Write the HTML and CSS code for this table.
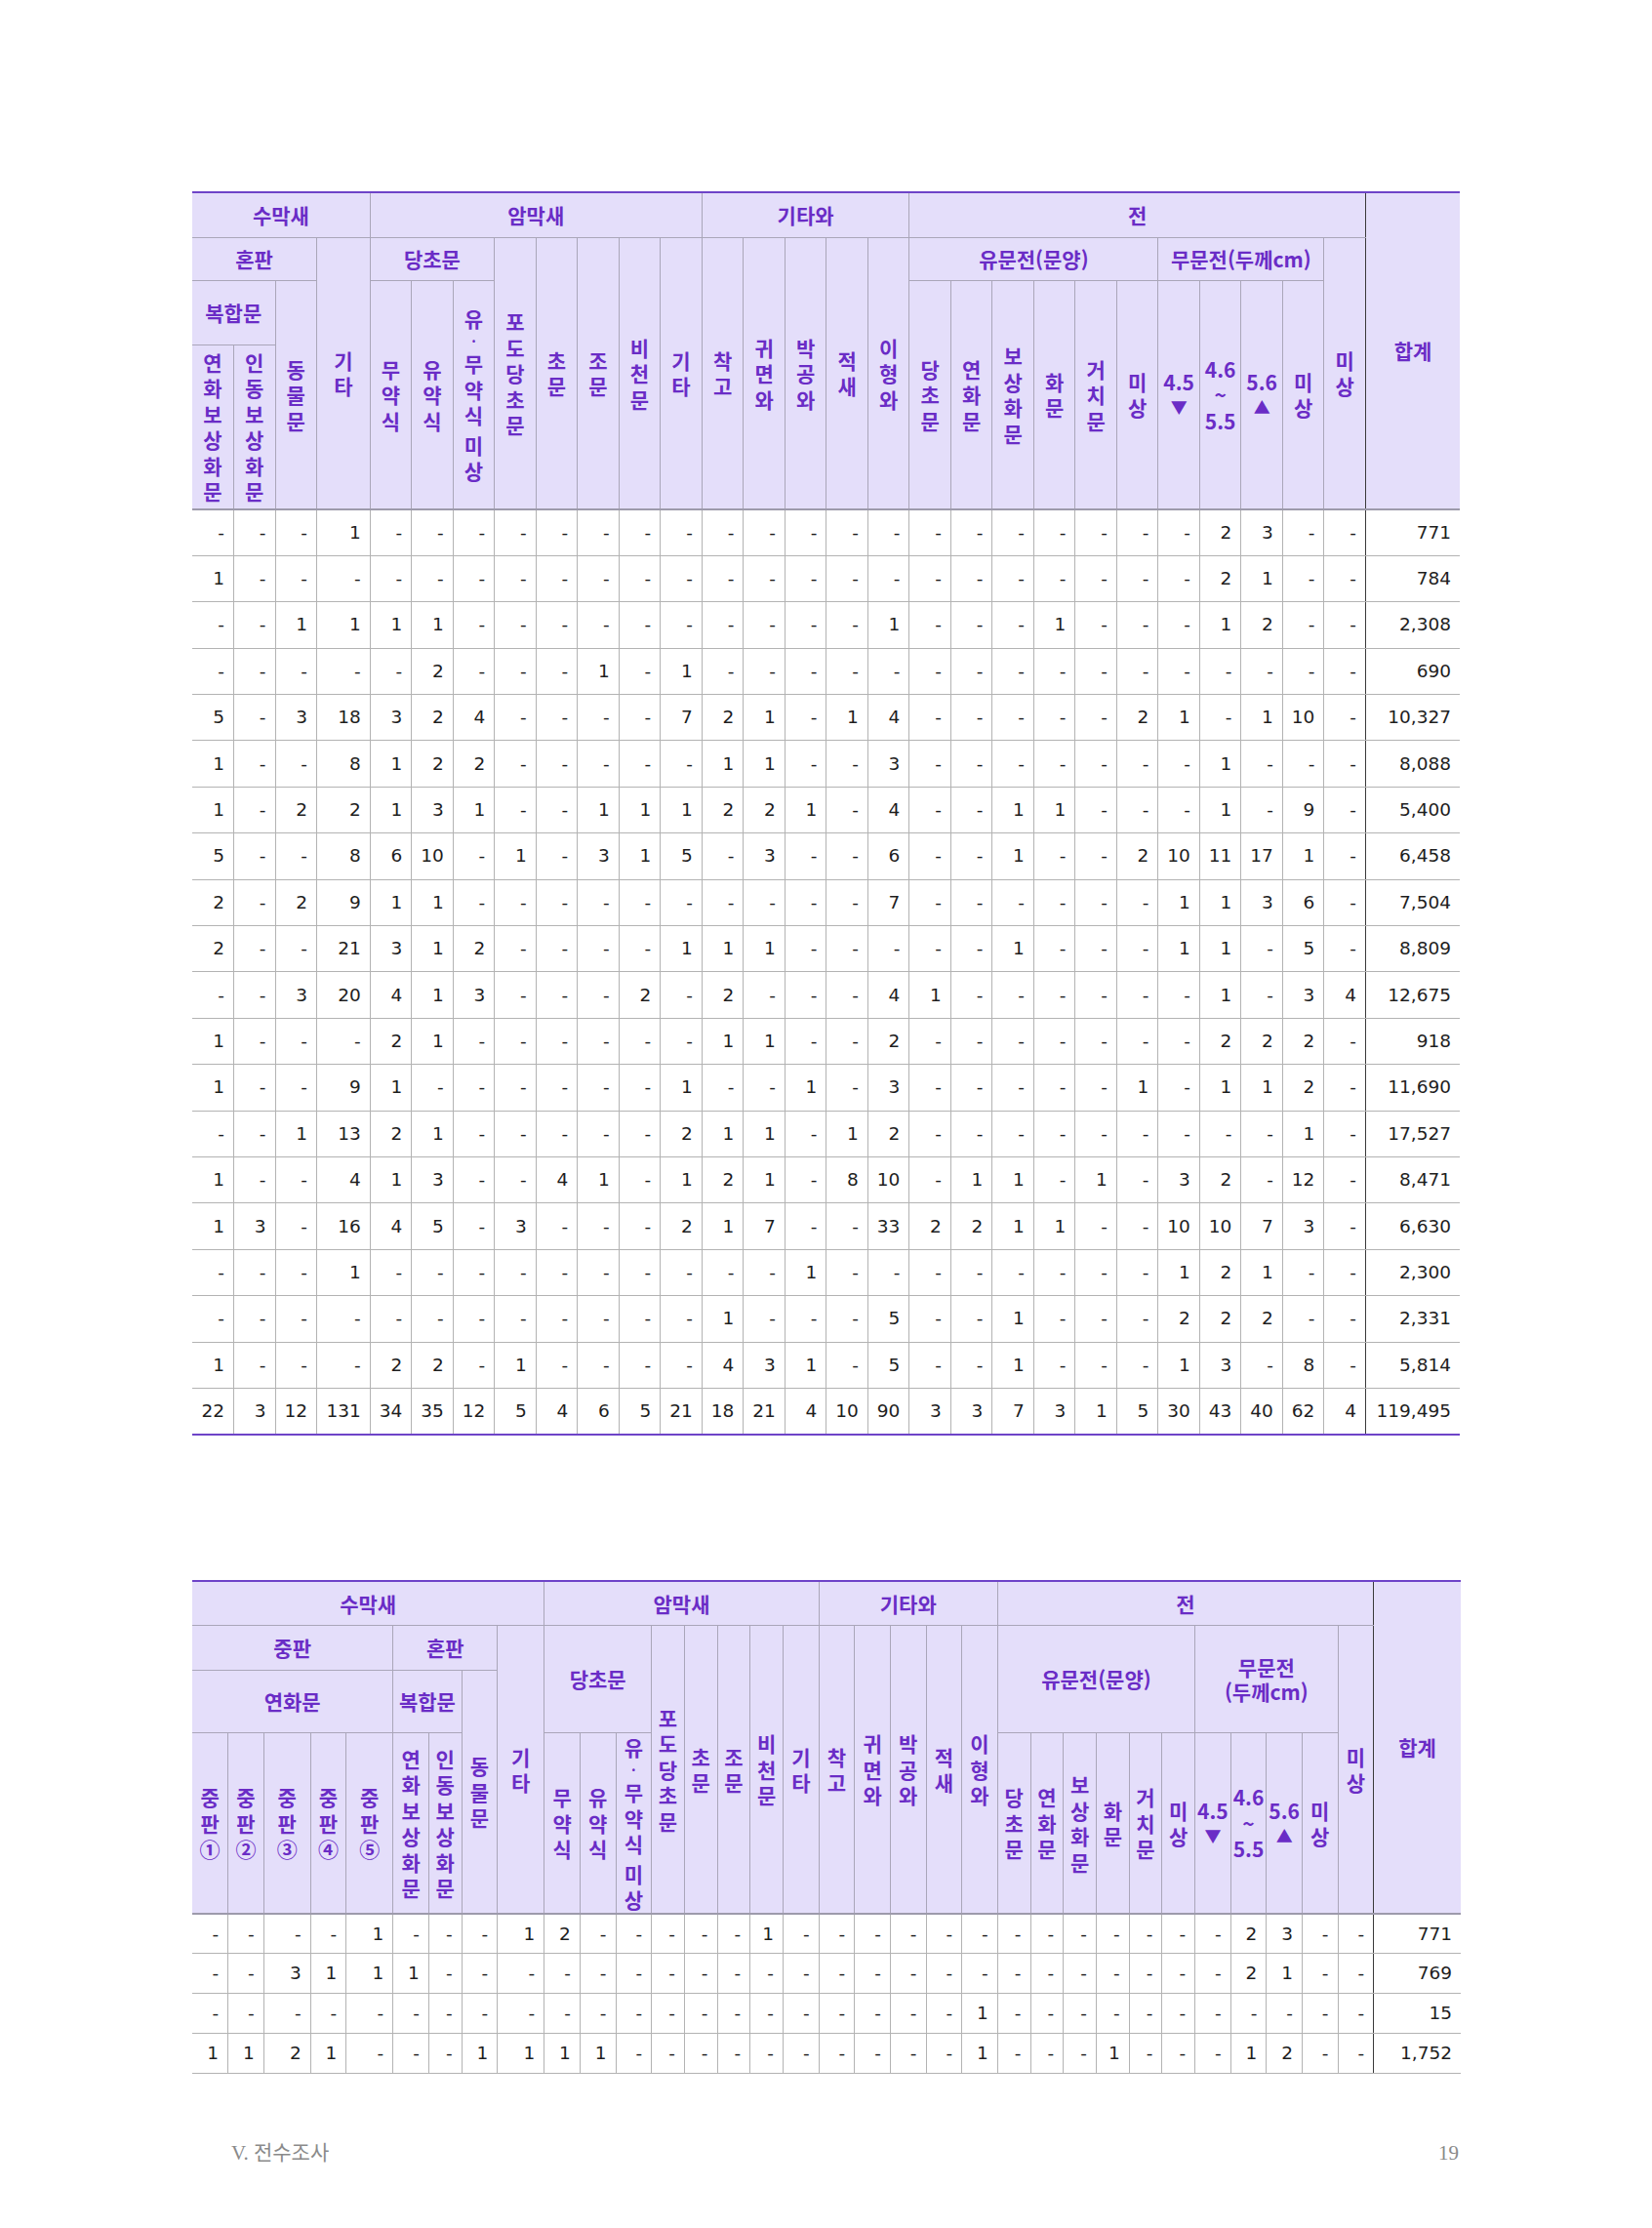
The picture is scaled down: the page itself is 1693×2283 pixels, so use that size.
FILE: index.html
```html
<!DOCTYPE html>
<html lang="ko">
<head>
<meta charset="utf-8">
<title>전수조사</title>
<link rel="stylesheet" href="styles.css">
</head>
<body>
<div class="page">

<table class="grid t1">
<colgroup>
<col class="n"><col class="n"><col class="n"><col class="w">
<col class="n"><col class="n"><col class="n"><col class="n"><col class="n"><col class="n"><col class="n"><col class="n">
<col class="n"><col class="n"><col class="n"><col class="n"><col class="n">
<col class="n"><col class="n"><col class="n"><col class="n"><col class="n"><col class="n"><col class="n"><col class="n"><col class="n"><col class="n"><col class="n">
<col class="s">
</colgroup>
<thead>
<tr class="h1">
<th colspan="4">수막새</th>
<th colspan="8">암막새</th>
<th colspan="5">기타와</th>
<th colspan="11" class="pre">전</th>
<th rowspan="4" class="sum">합계</th>
</tr>
<tr class="h2">
<th colspan="3">혼판</th>
<th rowspan="3" class="v"><span>기</span><span>타</span></th>
<th colspan="3">당초문</th>
<th rowspan="3" class="v"><span>포</span><span>도</span><span>당</span><span>초</span><span>문</span></th>
<th rowspan="3" class="v"><span>초</span><span>문</span></th>
<th rowspan="3" class="v"><span>조</span><span>문</span></th>
<th rowspan="3" class="v"><span>비</span><span>천</span><span>문</span></th>
<th rowspan="3" class="v"><span>기</span><span>타</span></th>
<th rowspan="3" class="v"><span>착</span><span>고</span></th>
<th rowspan="3" class="v"><span>귀</span><span>면</span><span>와</span></th>
<th rowspan="3" class="v"><span>박</span><span>공</span><span>와</span></th>
<th rowspan="3" class="v"><span>적</span><span>새</span></th>
<th rowspan="3" class="v"><span>이</span><span>형</span><span>와</span></th>
<th colspan="6">유문전(문양)</th>
<th colspan="4">무문전(두께cm)</th>
<th rowspan="3" class="v pre"><span>미</span><span>상</span></th>
</tr>
<tr class="h3">
<th colspan="2">복합문</th>
<th rowspan="2" class="v"><span>동</span><span>물</span><span>문</span></th>
<th rowspan="2" class="v"><span>무</span><span>약</span><span>식</span></th>
<th rowspan="2" class="v"><span>유</span><span>약</span><span>식</span></th>
<th rowspan="2" class="v"><span>유</span><span class="dot">·</span><span>무</span><span>약</span><span>식</span><span class="gap">미</span><span>상</span></th>
<th rowspan="2" class="v"><span>당</span><span>초</span><span>문</span></th>
<th rowspan="2" class="v"><span>연</span><span>화</span><span>문</span></th>
<th rowspan="2" class="v"><span>보</span><span>상</span><span>화</span><span>문</span></th>
<th rowspan="2" class="v"><span>화</span><span>문</span></th>
<th rowspan="2" class="v"><span>거</span><span>치</span><span>문</span></th>
<th rowspan="2" class="v"><span>미</span><span>상</span></th>
<th rowspan="2" class="v"><span>4.5</span><span class="tri">▼</span></th>
<th rowspan="2" class="v"><span>4.6</span><span>~</span><span>5.5</span></th>
<th rowspan="2" class="v"><span>5.6</span><span class="tri">▲</span></th>
<th rowspan="2" class="v"><span>미</span><span>상</span></th>
</tr>
<tr class="h4">
<th class="v"><span>연</span><span>화</span><span>보</span><span>상</span><span>화</span><span>문</span></th>
<th class="v"><span>인</span><span>동</span><span>보</span><span>상</span><span>화</span><span>문</span></th>
</tr>
</thead>
<tbody>
<tr><td>-</td><td>-</td><td>-</td><td>1</td><td>-</td><td>-</td><td>-</td><td>-</td><td>-</td><td>-</td><td>-</td><td>-</td><td>-</td><td>-</td><td>-</td><td>-</td><td>-</td><td>-</td><td>-</td><td>-</td><td>-</td><td>-</td><td>-</td><td>-</td><td>2</td><td>3</td><td>-</td><td>-</td><td>771</td></tr>
<tr><td>1</td><td>-</td><td>-</td><td>-</td><td>-</td><td>-</td><td>-</td><td>-</td><td>-</td><td>-</td><td>-</td><td>-</td><td>-</td><td>-</td><td>-</td><td>-</td><td>-</td><td>-</td><td>-</td><td>-</td><td>-</td><td>-</td><td>-</td><td>-</td><td>2</td><td>1</td><td>-</td><td>-</td><td>784</td></tr>
<tr><td>-</td><td>-</td><td>1</td><td>1</td><td>1</td><td>1</td><td>-</td><td>-</td><td>-</td><td>-</td><td>-</td><td>-</td><td>-</td><td>-</td><td>-</td><td>-</td><td>1</td><td>-</td><td>-</td><td>-</td><td>1</td><td>-</td><td>-</td><td>-</td><td>1</td><td>2</td><td>-</td><td>-</td><td>2,308</td></tr>
<tr><td>-</td><td>-</td><td>-</td><td>-</td><td>-</td><td>2</td><td>-</td><td>-</td><td>-</td><td>1</td><td>-</td><td>1</td><td>-</td><td>-</td><td>-</td><td>-</td><td>-</td><td>-</td><td>-</td><td>-</td><td>-</td><td>-</td><td>-</td><td>-</td><td>-</td><td>-</td><td>-</td><td>-</td><td>690</td></tr>
<tr><td>5</td><td>-</td><td>3</td><td>18</td><td>3</td><td>2</td><td>4</td><td>-</td><td>-</td><td>-</td><td>-</td><td>7</td><td>2</td><td>1</td><td>-</td><td>1</td><td>4</td><td>-</td><td>-</td><td>-</td><td>-</td><td>-</td><td>2</td><td>1</td><td>-</td><td>1</td><td>10</td><td>-</td><td>10,327</td></tr>
<tr><td>1</td><td>-</td><td>-</td><td>8</td><td>1</td><td>2</td><td>2</td><td>-</td><td>-</td><td>-</td><td>-</td><td>-</td><td>1</td><td>1</td><td>-</td><td>-</td><td>3</td><td>-</td><td>-</td><td>-</td><td>-</td><td>-</td><td>-</td><td>-</td><td>1</td><td>-</td><td>-</td><td>-</td><td>8,088</td></tr>
<tr><td>1</td><td>-</td><td>2</td><td>2</td><td>1</td><td>3</td><td>1</td><td>-</td><td>-</td><td>1</td><td>1</td><td>1</td><td>2</td><td>2</td><td>1</td><td>-</td><td>4</td><td>-</td><td>-</td><td>1</td><td>1</td><td>-</td><td>-</td><td>-</td><td>1</td><td>-</td><td>9</td><td>-</td><td>5,400</td></tr>
<tr><td>5</td><td>-</td><td>-</td><td>8</td><td>6</td><td>10</td><td>-</td><td>1</td><td>-</td><td>3</td><td>1</td><td>5</td><td>-</td><td>3</td><td>-</td><td>-</td><td>6</td><td>-</td><td>-</td><td>1</td><td>-</td><td>-</td><td>2</td><td>10</td><td>11</td><td>17</td><td>1</td><td>-</td><td>6,458</td></tr>
<tr><td>2</td><td>-</td><td>2</td><td>9</td><td>1</td><td>1</td><td>-</td><td>-</td><td>-</td><td>-</td><td>-</td><td>-</td><td>-</td><td>-</td><td>-</td><td>-</td><td>7</td><td>-</td><td>-</td><td>-</td><td>-</td><td>-</td><td>-</td><td>1</td><td>1</td><td>3</td><td>6</td><td>-</td><td>7,504</td></tr>
<tr><td>2</td><td>-</td><td>-</td><td>21</td><td>3</td><td>1</td><td>2</td><td>-</td><td>-</td><td>-</td><td>-</td><td>1</td><td>1</td><td>1</td><td>-</td><td>-</td><td>-</td><td>-</td><td>-</td><td>1</td><td>-</td><td>-</td><td>-</td><td>1</td><td>1</td><td>-</td><td>5</td><td>-</td><td>8,809</td></tr>
<tr><td>-</td><td>-</td><td>3</td><td>20</td><td>4</td><td>1</td><td>3</td><td>-</td><td>-</td><td>-</td><td>2</td><td>-</td><td>2</td><td>-</td><td>-</td><td>-</td><td>4</td><td>1</td><td>-</td><td>-</td><td>-</td><td>-</td><td>-</td><td>-</td><td>1</td><td>-</td><td>3</td><td>4</td><td>12,675</td></tr>
<tr><td>1</td><td>-</td><td>-</td><td>-</td><td>2</td><td>1</td><td>-</td><td>-</td><td>-</td><td>-</td><td>-</td><td>-</td><td>1</td><td>1</td><td>-</td><td>-</td><td>2</td><td>-</td><td>-</td><td>-</td><td>-</td><td>-</td><td>-</td><td>-</td><td>2</td><td>2</td><td>2</td><td>-</td><td>918</td></tr>
<tr><td>1</td><td>-</td><td>-</td><td>9</td><td>1</td><td>-</td><td>-</td><td>-</td><td>-</td><td>-</td><td>-</td><td>1</td><td>-</td><td>-</td><td>1</td><td>-</td><td>3</td><td>-</td><td>-</td><td>-</td><td>-</td><td>-</td><td>1</td><td>-</td><td>1</td><td>1</td><td>2</td><td>-</td><td>11,690</td></tr>
<tr><td>-</td><td>-</td><td>1</td><td>13</td><td>2</td><td>1</td><td>-</td><td>-</td><td>-</td><td>-</td><td>-</td><td>2</td><td>1</td><td>1</td><td>-</td><td>1</td><td>2</td><td>-</td><td>-</td><td>-</td><td>-</td><td>-</td><td>-</td><td>-</td><td>-</td><td>-</td><td>1</td><td>-</td><td>17,527</td></tr>
<tr><td>1</td><td>-</td><td>-</td><td>4</td><td>1</td><td>3</td><td>-</td><td>-</td><td>4</td><td>1</td><td>-</td><td>1</td><td>2</td><td>1</td><td>-</td><td>8</td><td>10</td><td>-</td><td>1</td><td>1</td><td>-</td><td>1</td><td>-</td><td>3</td><td>2</td><td>-</td><td>12</td><td>-</td><td>8,471</td></tr>
<tr><td>1</td><td>3</td><td>-</td><td>16</td><td>4</td><td>5</td><td>-</td><td>3</td><td>-</td><td>-</td><td>-</td><td>2</td><td>1</td><td>7</td><td>-</td><td>-</td><td>33</td><td>2</td><td>2</td><td>1</td><td>1</td><td>-</td><td>-</td><td>10</td><td>10</td><td>7</td><td>3</td><td>-</td><td>6,630</td></tr>
<tr><td>-</td><td>-</td><td>-</td><td>1</td><td>-</td><td>-</td><td>-</td><td>-</td><td>-</td><td>-</td><td>-</td><td>-</td><td>-</td><td>-</td><td>1</td><td>-</td><td>-</td><td>-</td><td>-</td><td>-</td><td>-</td><td>-</td><td>-</td><td>1</td><td>2</td><td>1</td><td>-</td><td>-</td><td>2,300</td></tr>
<tr><td>-</td><td>-</td><td>-</td><td>-</td><td>-</td><td>-</td><td>-</td><td>-</td><td>-</td><td>-</td><td>-</td><td>-</td><td>1</td><td>-</td><td>-</td><td>-</td><td>5</td><td>-</td><td>-</td><td>1</td><td>-</td><td>-</td><td>-</td><td>2</td><td>2</td><td>2</td><td>-</td><td>-</td><td>2,331</td></tr>
<tr><td>1</td><td>-</td><td>-</td><td>-</td><td>2</td><td>2</td><td>-</td><td>1</td><td>-</td><td>-</td><td>-</td><td>-</td><td>4</td><td>3</td><td>1</td><td>-</td><td>5</td><td>-</td><td>-</td><td>1</td><td>-</td><td>-</td><td>-</td><td>1</td><td>3</td><td>-</td><td>8</td><td>-</td><td>5,814</td></tr>
<tr class="total"><td>22</td><td>3</td><td>12</td><td>131</td><td>34</td><td>35</td><td>12</td><td>5</td><td>4</td><td>6</td><td>5</td><td>21</td><td>18</td><td>21</td><td>4</td><td>10</td><td>90</td><td>3</td><td>3</td><td>7</td><td>3</td><td>1</td><td>5</td><td>30</td><td>43</td><td>40</td><td>62</td><td>4</td><td>119,495</td></tr>
</tbody>
</table>

<table class="grid t2">
<colgroup>
<col class="a"><col class="a"><col class="c"><col class="a"><col class="c"><col class="a"><col class="b"><col class="a"><col class="c">
<col class="a"><col class="a"><col class="a"><col class="b"><col class="b"><col class="b"><col class="b"><col class="a">
<col class="a"><col class="a"><col class="a"><col class="a"><col class="a">
<col class="b"><col class="b"><col class="b"><col class="b"><col class="b"><col class="b"><col class="a"><col class="a"><col class="a"><col class="a"><col class="a">
<col class="s">
</colgroup>
<thead>
<tr class="h1">
<th colspan="9">수막새</th>
<th colspan="8">암막새</th>
<th colspan="5">기타와</th>
<th colspan="11" class="pre">전</th>
<th rowspan="4" class="sum">합계</th>
</tr>
<tr class="h2">
<th colspan="5">중판</th>
<th colspan="3">혼판</th>
<th rowspan="3" class="v"><span>기</span><span>타</span></th>
<th colspan="3" rowspan="2">당초문</th>
<th rowspan="3" class="v"><span>포</span><span>도</span><span>당</span><span>초</span><span>문</span></th>
<th rowspan="3" class="v"><span>초</span><span>문</span></th>
<th rowspan="3" class="v"><span>조</span><span>문</span></th>
<th rowspan="3" class="v"><span>비</span><span>천</span><span>문</span></th>
<th rowspan="3" class="v"><span>기</span><span>타</span></th>
<th rowspan="3" class="v"><span>착</span><span>고</span></th>
<th rowspan="3" class="v"><span>귀</span><span>면</span><span>와</span></th>
<th rowspan="3" class="v"><span>박</span><span>공</span><span>와</span></th>
<th rowspan="3" class="v"><span>적</span><span>새</span></th>
<th rowspan="3" class="v"><span>이</span><span>형</span><span>와</span></th>
<th colspan="6" rowspan="2">유문전(문양)</th>
<th colspan="4" rowspan="2">무문전<br>(두께cm)</th>
<th rowspan="3" class="v pre"><span>미</span><span>상</span></th>
</tr>
<tr class="h3">
<th colspan="5">연화문</th>
<th colspan="2">복합문</th>
<th rowspan="2" class="v"><span>동</span><span>물</span><span>문</span></th>
</tr>
<tr class="h4">
<th class="v"><span>중</span><span>판</span><span>①</span></th>
<th class="v"><span>중</span><span>판</span><span>②</span></th>
<th class="v"><span>중</span><span>판</span><span>③</span></th>
<th class="v"><span>중</span><span>판</span><span>④</span></th>
<th class="v"><span>중</span><span>판</span><span>⑤</span></th>
<th class="v"><span>연</span><span>화</span><span>보</span><span>상</span><span>화</span><span>문</span></th>
<th class="v"><span>인</span><span>동</span><span>보</span><span>상</span><span>화</span><span>문</span></th>
<th class="v"><span>무</span><span>약</span><span>식</span></th>
<th class="v"><span>유</span><span>약</span><span>식</span></th>
<th class="v"><span>유</span><span class="dot">·</span><span>무</span><span>약</span><span>식</span><span class="gap">미</span><span>상</span></th>
<th class="v"><span>당</span><span>초</span><span>문</span></th>
<th class="v"><span>연</span><span>화</span><span>문</span></th>
<th class="v"><span>보</span><span>상</span><span>화</span><span>문</span></th>
<th class="v"><span>화</span><span>문</span></th>
<th class="v"><span>거</span><span>치</span><span>문</span></th>
<th class="v"><span>미</span><span>상</span></th>
<th class="v"><span>4.5</span><span class="tri">▼</span></th>
<th class="v"><span>4.6</span><span>~</span><span>5.5</span></th>
<th class="v"><span>5.6</span><span class="tri">▲</span></th>
<th class="v"><span>미</span><span>상</span></th>
</tr>
</thead>
<tbody>
<tr><td>-</td><td>-</td><td>-</td><td>-</td><td>1</td><td>-</td><td>-</td><td>-</td><td>1</td><td>2</td><td>-</td><td>-</td><td>-</td><td>-</td><td>-</td><td>1</td><td>-</td><td>-</td><td>-</td><td>-</td><td>-</td><td>-</td><td>-</td><td>-</td><td>-</td><td>-</td><td>-</td><td>-</td><td>-</td><td>2</td><td>3</td><td>-</td><td>-</td><td>771</td></tr>
<tr><td>-</td><td>-</td><td>3</td><td>1</td><td>1</td><td>1</td><td>-</td><td>-</td><td>-</td><td>-</td><td>-</td><td>-</td><td>-</td><td>-</td><td>-</td><td>-</td><td>-</td><td>-</td><td>-</td><td>-</td><td>-</td><td>-</td><td>-</td><td>-</td><td>-</td><td>-</td><td>-</td><td>-</td><td>-</td><td>2</td><td>1</td><td>-</td><td>-</td><td>769</td></tr>
<tr><td>-</td><td>-</td><td>-</td><td>-</td><td>-</td><td>-</td><td>-</td><td>-</td><td>-</td><td>-</td><td>-</td><td>-</td><td>-</td><td>-</td><td>-</td><td>-</td><td>-</td><td>-</td><td>-</td><td>-</td><td>-</td><td>1</td><td>-</td><td>-</td><td>-</td><td>-</td><td>-</td><td>-</td><td>-</td><td>-</td><td>-</td><td>-</td><td>-</td><td>15</td></tr>
<tr><td>1</td><td>1</td><td>2</td><td>1</td><td>-</td><td>-</td><td>-</td><td>1</td><td>1</td><td>1</td><td>1</td><td>-</td><td>-</td><td>-</td><td>-</td><td>-</td><td>-</td><td>-</td><td>-</td><td>-</td><td>-</td><td>1</td><td>-</td><td>-</td><td>-</td><td>1</td><td>-</td><td>-</td><td>-</td><td>1</td><td>2</td><td>-</td><td>-</td><td>1,752</td></tr>
</tbody>
</table>

<footer class="foot">
<span>V. 전수조사</span>
<span>19</span>
</footer>

</div>
</body>
</html>
```

FILE: styles.css
```css
* {
  box-sizing: border-box;
}

body {
  margin: 0;
  background: #ffffff;
}

.page {
  width: 1693px;
  padding: 196px 0 0 197px;
}

.grid {
  border-collapse: collapse;
  table-layout: fixed;
}

.t1 {
  width: 1298.8px;
}

.t1 .n { width: 42.5px; }
.t1 .w { width: 54.7px; }
.t1 .s { width: 96.6px; }

.t2 {
  width: 1299.7px;
  margin-top: 148px;
}

.t2 .a { width: 36.61px; }
.t2 .b { width: 33.72px; }
.t2 .c { width: 47.97px; }
.t2 .s { width: 89.3px; }

.grid th {
  background: #e4defa;
  color: #6a2cc6;
  font-family: "Noto Sans CJK KR", sans-serif;
  font-weight: 700;
  font-size: 21px;
  line-height: 25px;
  border: 1px solid #aaa6b9;
  padding: 0;
  text-align: center;
  vertical-align: middle;
  white-space: nowrap;
}

.grid thead tr:first-child th {
  border-top: 2px solid #6e44c8;
}

.grid thead tr th:first-child {
  border-left-style: none;
}

.grid th.sum {
  border-left: 1px solid #3a3a3a;
  border-right-style: none;
}

.grid th.pre {
  border-right-color: #3a3a3a;
}

.v span {
  display: block;
  line-height: 26.5px;
}

.v .dot {
  font-size: 14px;
  line-height: 20px;
}

.v .gap {
  margin-top: 4px;
}

.v .tri {
  font-size: 17px;
}

.t1 .h1 { height: 46px; }
.t1 .h2 { height: 44px; }
.t1 .h3 { height: 66px; }
.t1 .h4 { height: 169px; }

.t2 .h1 { height: 46px; }
.t2 .h2 { height: 46px; }
.t2 .h3 { height: 64px; }
.t2 .h4 { height: 185px; }

.grid td {
  font-family: "DejaVu Sans", sans-serif;
  font-size: 18.5px;
  line-height: 20px;
  color: #1e1e1e;
  text-align: right;
  vertical-align: middle;
  padding: 0 9px 0 0;
  border: 1px solid #b3b3b3;
  white-space: nowrap;
}

.grid td:first-child {
  border-left-style: none;
}

.grid td:last-child {
  border-left: 1px solid #3a3a3a;
  border-right-style: none;
}

.grid td:nth-last-child(2) {
  border-right-color: #3a3a3a;
}

.grid tbody tr:first-child td {
  border-top: 2px solid #9d9aab;
}

.t1 tbody tr {
  height: 47.4px;
}

.t1 tbody tr.total td {
  border-bottom: 2px solid #6e44c8;
}

.t2 tbody tr {
  height: 41px;
}

.foot {
  display: flex;
  justify-content: space-between;
  width: 1298px;
  margin-top: 69px;
  padding-left: 40px;
  font-family: "Liberation Serif", "Noto Sans CJK KR", serif;
  font-size: 21px;
  line-height: 24px;
  color: #8a8a8a;
}
```
